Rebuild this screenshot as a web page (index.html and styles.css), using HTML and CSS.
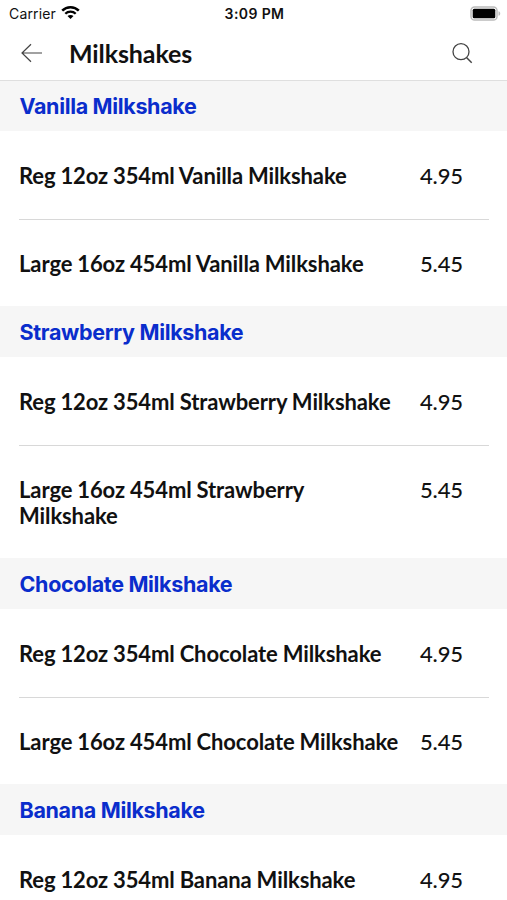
FILE: index.html
```html
<!DOCTYPE html>
<html lang="en">

<head>
  <meta charset="UTF-8">
  <meta name="viewport" content="width=device-width, initial-scale=1.0">
  <title>Milkshakes</title>
  <link rel="stylesheet" href="styles.css">
</head>

<body>
  <div class="status-bar">
    <div class="carrier">
      <span>Carrier</span>
      <svg class="wifi" width="19" height="15" viewBox="0 0 19 15">
        <path d="M1.2 5.600C5.800 1 13.200 1 17.800 5.600" fill="none" stroke="#000" stroke-width="2.500"/>
        <path d="M4.300 8.700C7.100 5.900 11.900 5.900 14.700 8.700" fill="none" stroke="#000" stroke-width="2.300"/>
        <path d="M9.500 14L6.500 11C8.200 9.500 10.800 9.500 12.500 11Z"/>
      </svg>
    </div>
    <div class="time">3:09 PM</div>
    <div class="battery">
      <svg width="31" height="15" viewBox="0 0 31 15">
        <rect x="1" y="1" width="26" height="13" rx="3.600" fill="none" stroke="#bbb" stroke-width="1.500"/>
        <rect x="2.700" y="2.700" width="22.600" height="9.600" rx="1.500"/>
        <path d="M28.500 5.200C30.800 5.800 30.800 9.200 28.500 9.800Z" fill="#bbb"/>
      </svg>
    </div>
  </div>

  <header class="header">
    <svg class="back" width="22" height="20" viewBox="0 0 22 20">
      <path d="M21 10H1M10 1.300L1 10L10 18.700" fill="none" stroke="#444" stroke-width="1.200"/>
    </svg>
    <h1>Milkshakes</h1>
    <svg class="search" width="21" height="21" viewBox="0 0 21 21">
      <circle cx="9" cy="8.700" r="8" fill="none" stroke="#444" stroke-width="1.300"/>
      <path d="M14.500 14.500L19.700 19.700" stroke="#444" stroke-width="1.500"/>
    </svg>
  </header>

  <main>
    <section>
      <h2>Vanilla Milkshake</h2>
      <ul>
        <li><span class="name">Reg 12oz 354ml Vanilla Milkshake</span><span class="price">4.95</span></li>
        <li><span class="name">Large 16oz 454ml Vanilla Milkshake</span><span class="price">5.45</span></li>
      </ul>
    </section>
    <section>
      <h2>Strawberry Milkshake</h2>
      <ul>
        <li><span class="name">Reg 12oz 354ml Strawberry Milkshake</span><span class="price">4.95</span></li>
        <li><span class="name">Large 16oz 454ml Strawberry Milkshake</span><span class="price">5.45</span></li>
      </ul>
    </section>
    <section>
      <h2>Chocolate Milkshake</h2>
      <ul>
        <li><span class="name">Reg 12oz 354ml Chocolate Milkshake</span><span class="price">4.95</span></li>
        <li><span class="name">Large 16oz 454ml Chocolate Milkshake</span><span class="price">5.45</span></li>
      </ul>
    </section>
    <section>
      <h2>Banana Milkshake</h2>
      <ul>
        <li><span class="name">Reg 12oz 354ml Banana Milkshake</span><span class="price">4.95</span></li>
      </ul>
    </section>
  </main>
</body>

</html>
```

FILE: styles.css
```css
* {
  box-sizing: border-box;
}

body {
  margin: 0;
  height: 900px;
  overflow: hidden;
  background: #fff;
  color: #111;
  font-family: Lato, sans-serif;
}

.status-bar {
  display: grid;
  grid-template-columns: 1fr auto 1fr;
  align-items: center;
  height: 27px;
  padding: 0 6px 0 9px;
  font-family: Inter, sans-serif;
  font-size: 14px;
}

.carrier {
  display: flex;
  align-items: center;
  gap: 5px;
  letter-spacing: 0.15px;
}

.wifi {
  position: relative;
  top: -1px;
}

.time {
  padding-right: 1px;
  font-weight: 600;
  letter-spacing: 0.4px;
}

.battery {
  display: flex;
  justify-content: flex-end;
}

.header {
  position: relative;
  z-index: 1;
  display: flex;
  align-items: center;
  height: 54px;
  padding: 0 34px 1px 21px;
  border-bottom: 1px solid #dfdfdf;
}

h1 {
  flex: 1;
  margin: 0 0 0 26px;
  font-size: 25px;
  font-weight: 700;
  letter-spacing: -0.1px;
}

/* slide under the header border */
main {
  margin-top: -1px;
}

h2 {
  margin: 0;
  height: 51px;
  padding: 1px 0 0 19.5px;
  background: #f6f6f6;
  color: #0a2dcc;
  font-family: Inter, sans-serif;
  font-size: 21.5px;
  font-weight: 650;
  letter-spacing: -0.33px;
  line-height: 51px;
}

ul {
  margin: 0;
  padding: 1px 18px 0 19px;
  list-style: none;
}

li {
  display: flex;
  padding: 31px 0 30px;
  font-size: 22px;
  line-height: 26px;
}

li + li {
  padding-bottom: 29px;
  border-top: 1px solid #d8d8d8;
}

.name {
  width: 401px;
  padding-right: 16px;
  font-weight: 700;
  letter-spacing: -0.1px;
  word-spacing: -0.3px;
}

.price {
  font-weight: 500;
  letter-spacing: -0.15px;
}
```
